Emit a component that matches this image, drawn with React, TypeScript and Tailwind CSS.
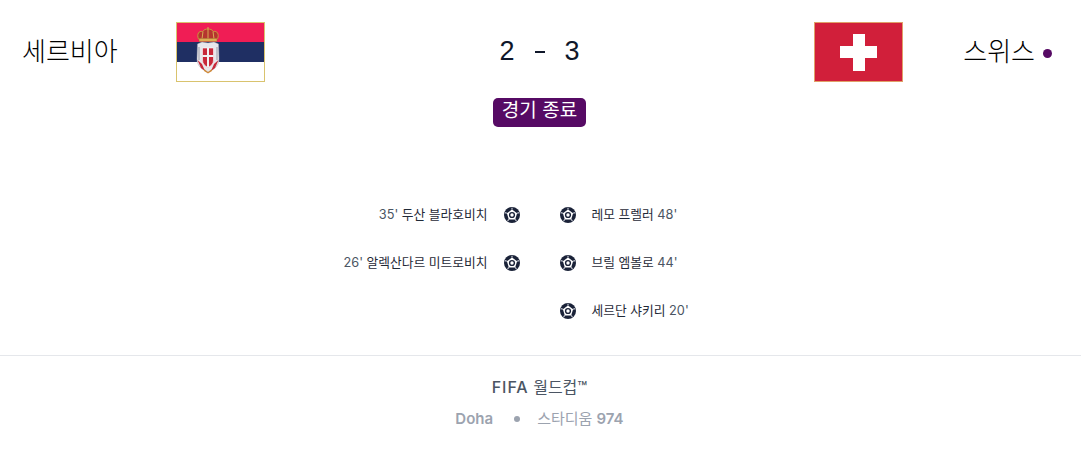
const korean = "font-['Inter','Noto_Sans_CJK_KR',sans-serif]";

const Ball = () => (
  <svg viewBox="0 0 16 16" className="w-4 h-4 shrink-0">
    <circle cx="8" cy="8" r="8" fill="#1a2238" />
    <path d="M8 2.6 L13.1 6.3 L11.2 12.4 L4.8 12.4 L2.9 6.3 Z" fill="#fff" />
    <path d="M8 2.6 V0.8 M13.1 6.3 L15 5.6 M11.2 12.4 L12.4 14 M4.8 12.4 L3.6 14 M2.9 6.3 L1 5.6" stroke="#c9ccd6" strokeWidth="1.2" />
    <circle cx="8" cy="8" r="3.1" fill="#1a2238" />
    <circle cx="8" cy="8" r="1.7" fill="#fff" />
  </svg>
);

const SerbiaFlag = () => (
  <svg viewBox="0 0 89 60" className="w-[89px] h-[60px]">
    <rect width="89" height="60" fill="#d9c36e" />
    <rect x="1" y="1" width="87" height="19.5" fill="#f01d55" />
    <rect x="1" y="20" width="87" height="20" fill="#1f2f63" />
    <rect x="1" y="40" width="87" height="19" fill="#fff" />
    {/* crown */}
    <path d="M22.5 17 C20.5 12 23 8.5 26.5 9.5 C28 7.5 30 7 32 7 C34 7 36 7.5 37.5 9.5 C41 8.5 43.5 12 41.5 17 Z" fill="#b5352f" stroke="#c9973f" strokeWidth="1" />
    <path d="M32 5 V17 M27 9.5 L26 17 M37 9.5 L38 17" stroke="#d9ab55" strokeWidth="1" />
    <rect x="23" y="16.5" width="18" height="3" fill="#dcae55" stroke="#96622c" strokeWidth="0.4" />
    {/* eagle */}
    <path d="M21.5 22 L26 20 L32 21 L38 20 L42.5 22 L43 37 C43 44 38 48 32 50 C26 48 21 44 21 37 Z" fill="#e7e7ec" stroke="#a8a8b4" strokeWidth="0.4" />
    <path d="M23 25 V38 M41 25 V38" stroke="#9b9ba8" strokeWidth="1" />
    <path d="M21.5 38 L25 46 L29 49 L26 42 Z M42.5 38 L39 46 L35 49 L38 42 Z" fill="#c8283a" />
    <path d="M26.5 26 H37.5 V38 C37.5 42 35 44 32 45.5 C29 44 26.5 42 26.5 38 Z" fill="#c8283a" stroke="#fff" strokeWidth="0.6" />
    <path d="M31 26 H33 V45 H31 Z M26.5 33 H37.5 V35 H26.5 Z" fill="#f2f2f5" />
    <path d="M28 47 L32 50 L36 47 L36 49 L32 51.5 L28 49 Z" fill="#d08a3a" />
  </svg>
);

const SwissFlag = () => (
  <div className="w-[89px] h-[60px] bg-[#d11f3a] border border-[#e0a068] flex items-center justify-center relative">
    <div className="w-[37px] h-[12px] bg-white" />
    <div className="absolute w-[12px] h-[37px] bg-white" />
  </div>
);

const homeGoals = [
  ["35'", "두산 블라호비치"],
  ["26'", "알렉산다르 미트로비치"],
];
const awayGoals = [
  ["레모 프렐러", "48'"],
  ["브릴 엠볼로", "44'"],
  ["세르단 샤키리", "20'"],
];

export default function App() {
  return (
    <div className={`w-[1081px] h-[458px] bg-white overflow-hidden ${korean}`}>
      <div className="flex items-start justify-between pt-[22px] pl-[22px] pr-[29px]">
        <div className="w-[243px] h-[60px] flex items-center justify-between">
          <span className="text-[26px] font-light text-black -mt-[2px]">세르비아</span>
          <SerbiaFlag />
        </div>
        <div className="h-[60px] flex items-center gap-[20px] text-[27px] text-[#0f172a] font-['Liberation_Sans',sans-serif] -mt-[1px]">
          <span>2</span>
          <span className="w-[10px] h-[2px] bg-[#0f172a] mt-[2px]" />
          <span>3</span>
        </div>
        <div className="w-[238px] h-[60px] flex items-center justify-between">
          <SwissFlag />
          <div className="flex items-center gap-[8px]">
            <span className="text-[26px] font-light text-black -mt-[2px]">스위스</span>
            <span className="w-[9px] h-[9px] rounded-full bg-[#560a64] mt-[2px]" />
          </div>
        </div>
      </div>

      <div className="flex justify-center mt-[16px]">
        <div className="w-[93px] h-[29px] rounded-[5px] bg-[#560a64] text-white text-[19px] flex items-center justify-center -ml-[2px] pb-[3px]">
          경기 종료
        </div>
      </div>

      <div className="grid grid-cols-2 gap-[40px] mt-[76px]">
        <div className="flex flex-col gap-[24px] pl-[300px] pr-[1px]">
          {homeGoals.map(([min, name]) => (
            <div key={name} className="h-[24px] flex items-center justify-end gap-[16px]">
              <span className="text-[12.75px] text-[#1f2937] whitespace-nowrap">
                <span className="text-[#4b5563]">{min}</span> {name}
              </span>
              <Ball />
            </div>
          ))}
        </div>
        <div className="flex flex-col gap-[24px] -ml-[1px]">
          {awayGoals.map(([name, min]) => (
            <div key={name} className="h-[24px] flex items-center gap-[16px]">
              <Ball />
              <span className="text-[12.75px] text-[#1f2937] whitespace-nowrap">
                {name} <span className="text-[#4b5563]">{min}</span>
              </span>
            </div>
          ))}
        </div>
      </div>

      <div className="border-t border-[#e5e7eb] mt-[32px] pt-[19px] flex flex-col items-center">
        <div className="text-[16px] text-[#4b5563] leading-[24px] whitespace-nowrap -ml-[2px]">
          <span className="font-medium tracking-[0.06em]">FIFA</span> 월드컵<span className="font-medium">™</span>
        </div>
        <div className="flex items-center mt-[8px] -ml-[2px] text-[15px] text-[#9ca3af] leading-[24px]">
          <span className="font-semibold">Doha</span>
          <span className="w-[6px] h-[6px] ml-[21px] mr-[17px] rounded-full bg-[#9ca3af]" />
          <span>
            스타디움 <span className="font-semibold">974</span>
          </span>
        </div>
      </div>
    </div>
  );
}
